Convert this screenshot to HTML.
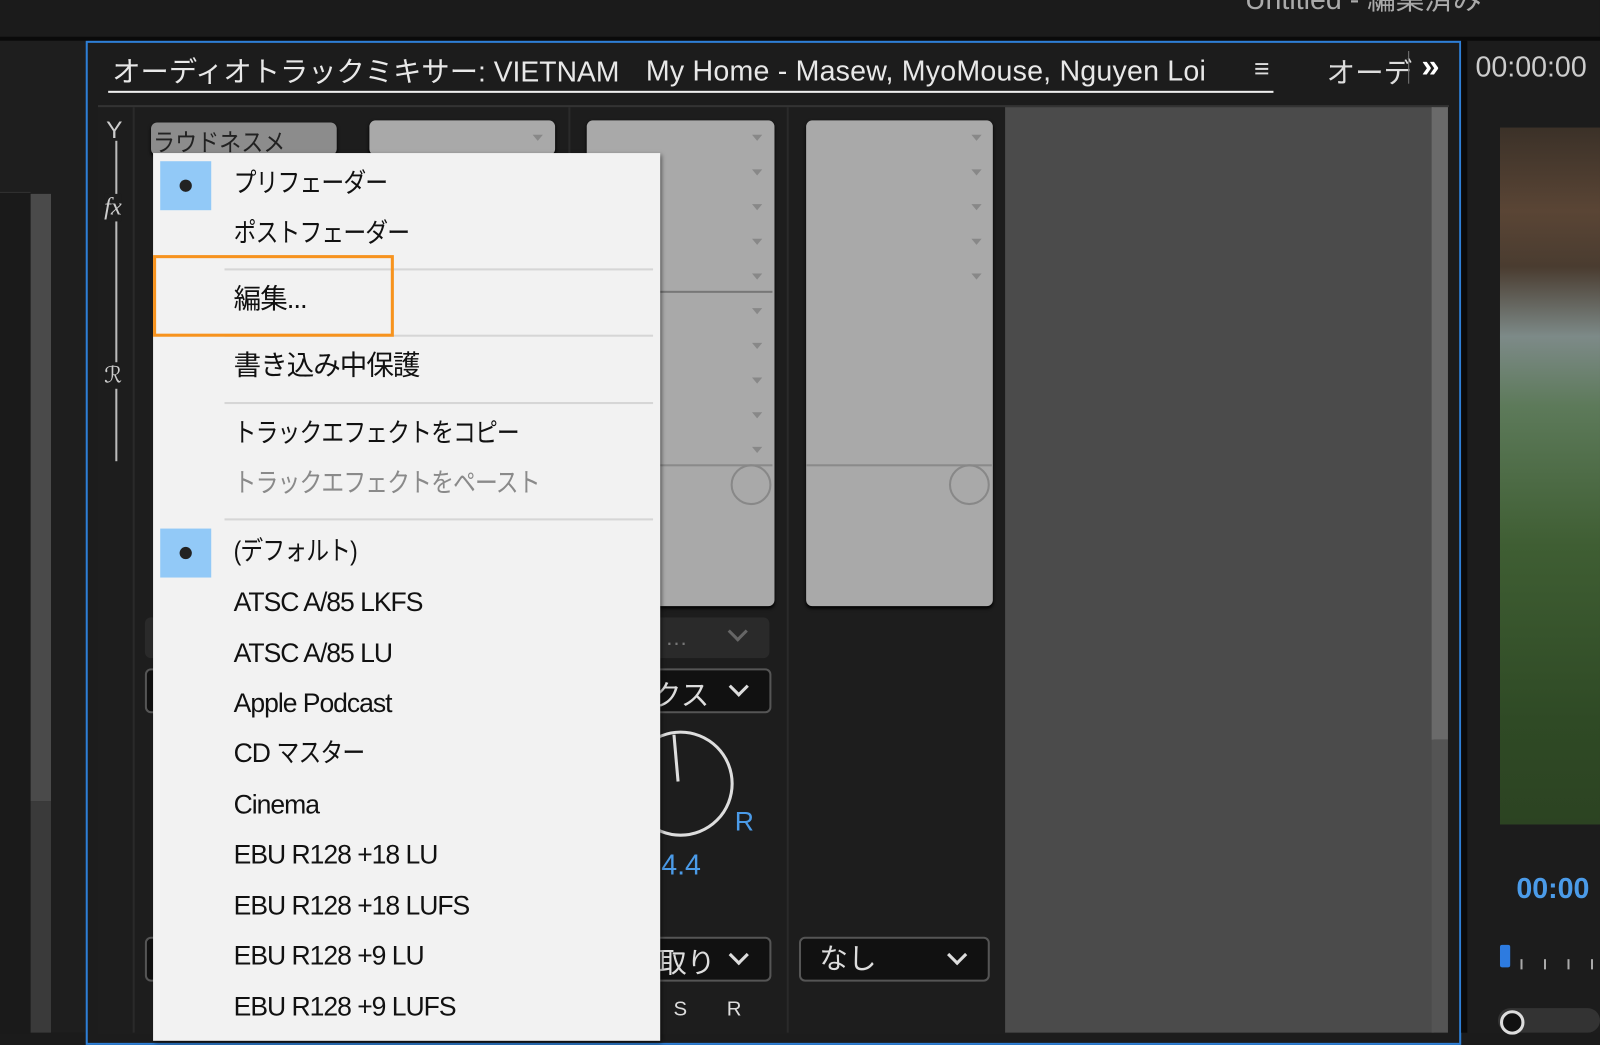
<!DOCTYPE html>
<html><head><meta charset="utf-8"><style>
html,body{margin:0;padding:0;width:1600px;height:1033px;overflow:hidden;background:#1b1b1b}
#s{position:absolute;left:0;top:0;width:1568px;height:1012px;transform:scale(1.0204);transform-origin:0 0;font-family:"Liberation Sans","Noto Sans CJK JP",sans-serif}
.a{position:absolute}
.mi{position:absolute;left:229px;font-size:26px;color:#111;white-space:nowrap;line-height:1;letter-spacing:-1px;transform-origin:0 0}
.j{transform:scaleX(0.86)}
.sep{position:absolute;left:220px;width:420px;height:2px;background:#d6d6d6}
.chk{position:absolute;left:157px;width:50px;height:48px;background:#92c9f7}
.chk:after{content:"";position:absolute;left:19px;top:18px;width:12px;height:12px;border-radius:50%;background:#222}
.box{position:absolute;background:#a9a9a9;border-radius:6px;box-shadow:0 2px 3px #000}
.tri{position:absolute;width:0;height:0;border-left:5px solid transparent;border-right:5px solid transparent;border-top:6px solid #888}
.dd{position:absolute;border:2px solid #555;border-radius:6px;background:#111;color:#ddd;font-size:28px;height:40px;line-height:40px}
.chev{position:absolute;width:11px;height:11px;border-right:3px solid #ddd;border-bottom:3px solid #ddd;transform:rotate(45deg)}
</style></head><body><div id="s">
<div class="a" style="left:0;top:0;width:1568px;height:36px;background:#1b1b1b"></div>
<div class="a" style="left:1220px;top:-22px;color:#aaa;font-size:28px">Untitled - 編集済み</div>
<div class="a" style="left:0;top:36px;width:1568px;height:4px;background:#0a0a0a"></div>
<div class="a" style="left:0;top:40px;width:84px;height:972px;background:#1e1e1e"></div>
<div class="a" style="left:0;top:188px;width:30px;height:824px;background:#1a1a1a;border-top:1px solid #333"></div>
<div class="a" style="left:30px;top:190px;width:20px;height:595px;background:#4a4a4a"></div>
<div class="a" style="left:30px;top:785px;width:20px;height:227px;background:#3a3a3a"></div>
<!-- main panel -->
<div class="a" style="left:84px;top:40px;width:1344px;height:980px;border:2px solid #2e7fd6;background:#1c1c1c"></div>
<div class="a" style="left:110px;top:49px;color:#e8e8e8;font-size:28px;white-space:nowrap;transform:scaleX(0.99);transform-origin:0 0">オーディオトラックミキサー: VIETNAM</div>
<div class="a" style="left:633px;top:54px;color:#e8e8e8;font-size:28px;white-space:nowrap;letter-spacing:0.2px">My Home - Masew, MyoMouse, Nguyen Loi</div>
<div class="a" style="left:106px;top:89px;width:1142px;height:2px;background:#eee"></div>
<div class="a" style="left:1229px;top:52px;color:#ddd;font-size:26px">≡</div>
<div class="a" style="left:1300px;top:50px;color:#ddd;font-size:28px">オーデ</div>
<div class="a" style="left:1380px;top:50px;width:1px;height:32px;background:#777"></div>
<div class="a" style="left:1393px;top:46px;color:#fff;font-size:32px;font-weight:bold">»</div>
<!-- mixer -->
<div class="a" style="left:96px;top:103px;width:1324px;height:909px;background:#1d1d1d;border-top:2px solid #333"></div>
<div class="a" style="left:130px;top:105px;width:2px;height:907px;background:#2a2a2a"></div>
<div class="a" style="left:557px;top:105px;width:2px;height:907px;background:#2a2a2a"></div>
<div class="a" style="left:771px;top:105px;width:2px;height:907px;background:#2a2a2a"></div>
<div class="a" style="left:985px;top:105px;width:420px;height:907px;background:#4b4b4b"></div>
<div class="a" style="left:1403px;top:105px;width:16px;height:620px;background:#6a6a6a"></div>
<div class="a" style="left:1403px;top:725px;width:16px;height:287px;background:#545454"></div>
<!-- left icons -->
<div class="a" style="left:104px;top:114px;color:#ccc;font-size:24px">Y</div>
<div class="a" style="left:113px;top:138px;width:2px;height:314px;background:#bbb"></div>
<div class="a" style="left:102px;top:190px;color:#ccc;font-size:24px;font-style:italic;font-family:'Liberation Serif',serif;background:#1d1d1d">fx</div>
<div class="a" style="left:102px;top:355px;color:#ccc;font-size:22px;background:#1d1d1d">ℛ</div>
<!-- boxes -->
<div class="box" style="left:148px;top:120px;width:182px;height:32px;background:#8c8c8c"></div>
<div class="a" style="left:150px;top:120px;color:#222;font-size:24px;white-space:nowrap;transform:scaleX(0.9);transform-origin:0 0">ラウドネスメ</div>
<div class="box" style="left:362px;top:118px;width:182px;height:34px"></div>
<div class="tri" style="left:522px;top:132px"></div>
<div class="box" style="left:575px;top:118px;width:184px;height:476px"></div>
<div class="a" style="left:575px;top:285px;width:182px;height:2px;background:#777"></div>
<div class="a" style="left:575px;top:455px;width:182px;height:2px;background:#8a8a8a"></div>
<div class="a" style="left:716px;top:455px;width:36px;height:36px;border:2px solid #888;border-radius:50%"></div>
<div class="box" style="left:790px;top:118px;width:183px;height:476px"></div>
<div class="a" style="left:790px;top:455px;width:182px;height:2px;background:#8a8a8a"></div>
<div class="a" style="left:930px;top:455px;width:36px;height:36px;border:2px solid #888;border-radius:50%"></div>
<div class="tri" style="left:737px;top:132px"></div><div class="tri" style="left:737px;top:166px"></div><div class="tri" style="left:737px;top:200px"></div><div class="tri" style="left:737px;top:234px"></div><div class="tri" style="left:737px;top:268px"></div><div class="tri" style="left:737px;top:302px"></div><div class="tri" style="left:737px;top:336px"></div><div class="tri" style="left:737px;top:370px"></div><div class="tri" style="left:737px;top:404px"></div><div class="tri" style="left:737px;top:438px"></div>
<div class="tri" style="left:952px;top:132px"></div><div class="tri" style="left:952px;top:166px"></div><div class="tri" style="left:952px;top:200px"></div><div class="tri" style="left:952px;top:234px"></div><div class="tri" style="left:952px;top:268px"></div>
<!-- bottom controls -->
<div class="a" style="left:142px;top:605px;width:612px;height:40px;background:#2a2a2a;border-radius:6px"></div>
<div class="a" style="left:652px;top:612px;color:#777;font-size:22px">…</div>
<div class="chev" style="left:716px;top:612px;border-color:#666"></div>
<div class="dd" style="left:142px;top:655px;width:610px"></div>
<div class="a" style="left:640px;top:660px;color:#ddd;font-size:28px">クス</div>
<div class="chev" style="left:717px;top:666px"></div>
<div class="a" style="left:615px;top:716px;width:98px;height:98px;border:3px solid #ddd;border-radius:50%"></div>
<div class="a" style="left:661px;top:720px;width:3px;height:46px;background:#ddd;transform:rotate(-5deg)"></div>
<div class="a" style="left:720px;top:790px;color:#4b9be8;font-size:26px">R</div>
<div class="a" style="left:648px;top:832px;color:#4b9be8;font-size:28px">4.4</div>
<div class="dd" style="left:142px;top:918px;width:610px"></div>
<div class="a" style="left:645px;top:922px;color:#ddd;font-size:28px">取り</div>
<div class="chev" style="left:717px;top:929px"></div>
<div class="dd" style="left:783px;top:918px;width:183px"><span style="margin-left:18px">なし</span></div>
<div class="chev" style="left:931px;top:929px"></div>
<div class="a" style="left:660px;top:978px;color:#ddd;font-size:20px;white-space:nowrap">S&nbsp;&nbsp;&nbsp;&nbsp;&nbsp;&nbsp;&nbsp;R</div>
<!-- right panel -->
<div class="a" style="left:1432px;top:40px;width:136px;height:972px;background:#1c1c1c"></div>
<div class="a" style="left:1432px;top:40px;width:6px;height:972px;background:#0a0a0a"></div>
<div class="a" style="left:1446px;top:50px;color:#ccc;font-size:28px;white-space:nowrap">00:00:00</div>
<div class="a" style="left:1470px;top:125px;width:98px;height:683px;background:linear-gradient(180deg,#3b3128 0%,#5a4535 12%,#4a3c30 20%,#7d8a88 30%,#5d7a5a 40%,#3f5e33 60%,#2f4a25 85%,#2c4322 100%)"></div>
<div class="a" style="left:1486px;top:855px;color:#4b9be8;font-size:28px;font-weight:bold">00:00</div>
<div class="a" style="left:1470px;top:926px;width:10px;height:22px;background:#2d7be0;border-radius:2px"></div>
<div class="a" style="left:1490px;top:940px;width:90px;height:10px;background:repeating-linear-gradient(90deg,#aaa 0 2px,transparent 2px 23px)"></div>
<div class="a" style="left:1468px;top:988px;width:100px;height:24px;background:#333;border-radius:12px"></div>
<div class="a" style="left:1470px;top:990px;width:18px;height:18px;border:3px solid #ddd;border-radius:50%;background:#111"></div>
<!-- menu -->
<div class="a" style="left:150px;top:150px;width:497px;height:870px;background:#f2f2f2;box-shadow:2px 2px 4px rgba(0,0,0,.5)"></div>
<div class="chk" style="top:158px"></div>
<div class="mi j" style="top:166px">プリフェーダー</div>
<div class="mi j" style="top:215px">ポストフェーダー</div>
<div class="sep" style="top:263px"></div>
<div class="mi" style="top:280px;font-size:27px">編集...</div>
<div class="sep" style="top:328px"></div>
<div class="mi" style="top:345px;font-size:27px">書き込み中保護</div>
<div class="sep" style="top:394px"></div>
<div class="mi j" style="top:411px">トラックエフェクトをコピー</div>
<div class="mi j" style="top:460px;color:#8a8a8a">トラックエフェクトをペースト</div>
<div class="sep" style="top:508px"></div>
<div class="chk" style="top:518px"></div>
<div class="mi j" style="top:527px">(デフォルト)</div>
<div class="mi" style="top:577px">ATSC A/85 LKFS</div>
<div class="mi" style="top:627px">ATSC A/85 LU</div>
<div class="mi" style="top:676px">Apple Podcast</div>
<div class="mi" style="top:725px">CD <span style="display:inline-block;transform:scaleX(0.86);transform-origin:0 0">マスター</span></div>
<div class="mi" style="top:775px">Cinema</div>
<div class="mi" style="top:824px">EBU R128 +18 LU</div>
<div class="mi" style="top:874px">EBU R128 +18 LUFS</div>
<div class="mi" style="top:923px">EBU R128 +9 LU</div>
<div class="mi" style="top:973px">EBU R128 +9 LUFS</div>
<div class="a" style="left:150px;top:250px;width:230px;height:74px;border:3px solid #f7931e"></div>
</div></body></html>
